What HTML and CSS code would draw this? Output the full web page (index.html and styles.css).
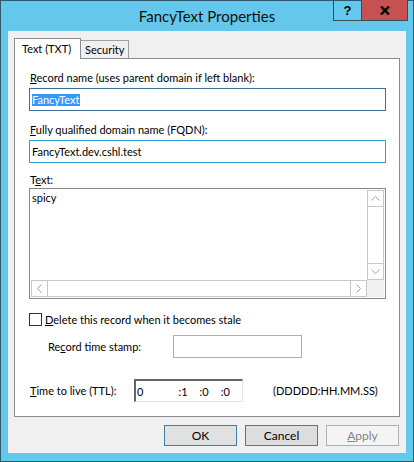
FILE: index.html
```html
<!DOCTYPE html>
<html lang="en">
<head>
    <meta charset="UTF-8">
    <title>FancyText Properties</title>
    <link rel="stylesheet" href="styles.css">
</head>
<body>
    <div class="window">
        <div class="titlebar">
            <span></span>
            <span class="title">FancyText Properties</span>
            <div class="caption-buttons">
                <span class="cap-help">?</span>
                <span class="cap-close">
                    <svg width="10" height="9" viewBox="0 0 10 9"><path d="M1 0.5 L9 8.5 M9 0.5 L1 8.5" stroke="#000" stroke-width="2.4"/></svg>
                </span>
            </div>
        </div>

        <div class="client">
            <div class="tabs">
                <span class="tab active">Text (TXT)</span>
                <span class="tab">Security</span>
            </div>
            <div class="panel">
                <label class="label"><u>R</u>ecord name (uses parent domain if left blank):</label>
                <div class="field focused"><span class="selected">FancyText</span></div>

                <label class="label"><u>F</u>ully qualified domain name (FQDN):</label>
                <div class="field hover">FancyText.dev.cshl.test</div>

                <label class="label label-text">T<u>e</u>xt:</label>
                <div class="memo">
                    <div class="memo-text">spicy</div>
                    <div class="vscroll">
                        <span class="sbtn">
                            <svg width="9" height="5" viewBox="0 0 9 5"><path d="M0.5 4.5 L4.5 0.5 L8.5 4.5" fill="none" stroke="#a6a6a6"/></svg>
                        </span>
                        <span class="track"></span>
                        <span class="sbtn">
                            <svg width="9" height="5" viewBox="0 0 9 5"><path d="M0.5 0.5 L4.5 4.5 L8.5 0.5" fill="none" stroke="#a6a6a6"/></svg>
                        </span>
                    </div>
                    <div class="hscroll">
                        <span class="sbtn">
                            <svg width="5" height="9" viewBox="0 0 5 9"><path d="M4.5 0.5 L0.5 4.5 L4.5 8.5" fill="none" stroke="#a6a6a6"/></svg>
                        </span>
                        <span class="track"></span>
                        <span class="sbtn">
                            <svg width="5" height="9" viewBox="0 0 5 9"><path d="M0.5 0.5 L4.5 4.5 L0.5 8.5" fill="none" stroke="#a6a6a6"/></svg>
                        </span>
                    </div>
                    <div class="corner"></div>
                </div>

                <div class="check-row">
                    <span class="checkbox"></span>
                    <span><u>D</u>elete this record when it becomes stale</span>
                </div>

                <div class="stamp-row">
                    <span class="stamp-label">Re<u>c</u>ord time stamp:</span>
                    <span class="stamp-box"></span>
                </div>

                <div class="ttl-row">
                    <span class="ttl-label"><u>T</u>ime to live (TTL):</span>
                    <span class="ttl-box">
                        <span class="seg days">0</span>
                        <span class="seg">:1</span>
                        <span class="seg">:0</span>
                        <span class="seg">:0</span>
                    </span>
                    <span class="ttl-format">(DDDDD:HH.MM.SS)</span>
                </div>
            </div>

            <div class="buttons">
                <button class="default">OK</button>
                <button>Cancel</button>
                <button class="disabled"><u>A</u>pply</button>
            </div>
        </div>
    </div>
</body>
</html>
```

FILE: styles.css
```css
body {
    margin: 0;
    font-family: "Segoe UI", Lato, "Liberation Sans", Arial, sans-serif;
    font-size: 11px;
    color: #000;
}
u {
    text-decoration-thickness: 1px;
    text-underline-offset: 1px;
}
.window {
    width: 414px;
    height: 462px;
    box-sizing: border-box;
    border: 1px solid #2f5a6b;
    background-color: #63c8eb;
}
.titlebar {
    height: 30px;
    display: grid;
    grid-template-columns: 1fr auto 1fr;
}
.title {
    font-size: 15px;
    line-height: 30px;
    color: #111;
}
.caption-buttons {
    justify-self: end;
    align-self: start;
    display: flex;
    margin-top: -1px;
    margin-right: 5px;
}
.cap-help, .cap-close {
    height: 20px;
    display: flex;
    align-items: center;
    justify-content: center;
    border: 1px solid #3a4a52;
    border-top: none;
}
.cap-help {
    width: 27px;
    font-family: "Liberation Sans", Arial, sans-serif;
    font-weight: bold;
    font-size: 13px;
    border-right: none;
}
.cap-close {
    width: 45px;
    background-color: #c75050;
}
.client {
    margin: 0 7px;
    height: 422px;
    background-color: #f0f0f0;
    padding: 7px 6px 0;
    box-sizing: border-box;
}
.tabs {
    display: flex;
    align-items: flex-end;
    height: 20px;
}
.tab {
    height: 17px;
    line-height: 18px;
    padding: 0 4px;
    white-space: nowrap;
    border: 1px solid #a0a0a0;
    border-bottom: none;
    background-color: #f0f0f0;
    margin-left: -1px;
}
.tab.active {
    height: 20px;
    line-height: 19px;
    width: 51px;
    padding: 0 7px;
    margin-left: 0;
    margin-bottom: -1px;
    background-color: #fff;
    border-color: #898c95;
    position: relative;
    z-index: 1;
}
.panel {
    height: 359px;
    box-sizing: border-box;
    border: 1px solid #898c95;
    background-color: #fff;
    padding: 11px 13px 0 14px;
}
.label {
    display: block;
    line-height: 15px;
    padding-left: 1px;
    margin-bottom: 3px;
}
.label-text {
    margin-top: -2px;
    margin-bottom: 1px;
}
.field {
    height: 23px;
    box-sizing: border-box;
    border: 1px solid #3d6f99;
    padding-left: 2px;
    line-height: 21px;
    margin-bottom: 11px;
}
.field.hover {
    border-color: #2a9fd8;
}
.selected {
    background-color: #3399ff;
    color: #fff;
    display: inline-block;
    line-height: 12px;
    padding-right: 1px;
}
.memo {
    height: 111px;
    box-sizing: border-box;
    border: 1px solid #828790;
    padding: 1px;
    display: grid;
    grid-template-columns: 1fr 17px;
    grid-template-rows: 1fr 17px;
}
.memo-text {
    padding-left: 1px;
    line-height: 16px;
}
.vscroll, .hscroll {
    display: flex;
    border: 1px solid #c8c8c8;
    box-sizing: border-box;
}
.vscroll {
    flex-direction: column;
}
.sbtn {
    width: 15px;
    height: 15px;
    display: flex;
    align-items: center;
    justify-content: center;
}
.vscroll .sbtn:first-child { border-bottom: 1px solid #c8c8c8; }
.vscroll .sbtn:last-child { border-top: 1px solid #c8c8c8; }
.hscroll .sbtn:first-child { border-right: 1px solid #c8c8c8; }
.hscroll .sbtn:last-child { border-left: 1px solid #c8c8c8; }
.track {
    flex: 1;
}
.corner {
    background-color: #f0f0f0;
}
.check-row {
    display: flex;
    align-items: center;
    height: 15px;
    margin-top: 13px;
}
.checkbox {
    width: 13px;
    height: 13px;
    box-sizing: border-box;
    border: 1px solid #333;
    background-color: #fff;
    margin-right: 3px;
}
.stamp-row {
    display: flex;
    align-items: center;
    margin-top: 8px;
    padding-left: 19px;
}
.stamp-label {
    width: 125px;
}
.stamp-box {
    width: 129px;
    height: 23px;
    box-sizing: border-box;
    border: 1px solid #abadb3;
}
.ttl-row {
    display: flex;
    align-items: center;
    margin-top: 21px;
}
.ttl-label {
    width: 104px;
    padding-left: 1px;
}
.ttl-box {
    width: 109px;
    height: 23px;
    box-sizing: border-box;
    border: 1px solid #e3e3e3;
    border-top: 2px solid #646464;
    border-left: 2px solid #646464;
    display: flex;
    align-items: center;
    padding-left: 1px;
}
.seg {
    width: 22px;
}
.seg.days {
    width: 43px;
}
.ttl-format {
    margin-left: 30px;
}
.buttons {
    display: flex;
    justify-content: flex-end;
    gap: 8px;
    margin-top: 8px;
    padding-right: 1px;
}
button {
    width: 73px;
    height: 21px;
    font-family: inherit;
    font-size: 12px;
    color: #000;
    border: 1px solid #707070;
    background-color: #dddddd;
    padding: 0;
}
button.default {
    border-color: #3c7fb1;
    background-color: #e1e1e1;
}
button.disabled {
    border-color: #adb2b5;
    background-color: #f4f4f4;
    color: #838383;
}
```
